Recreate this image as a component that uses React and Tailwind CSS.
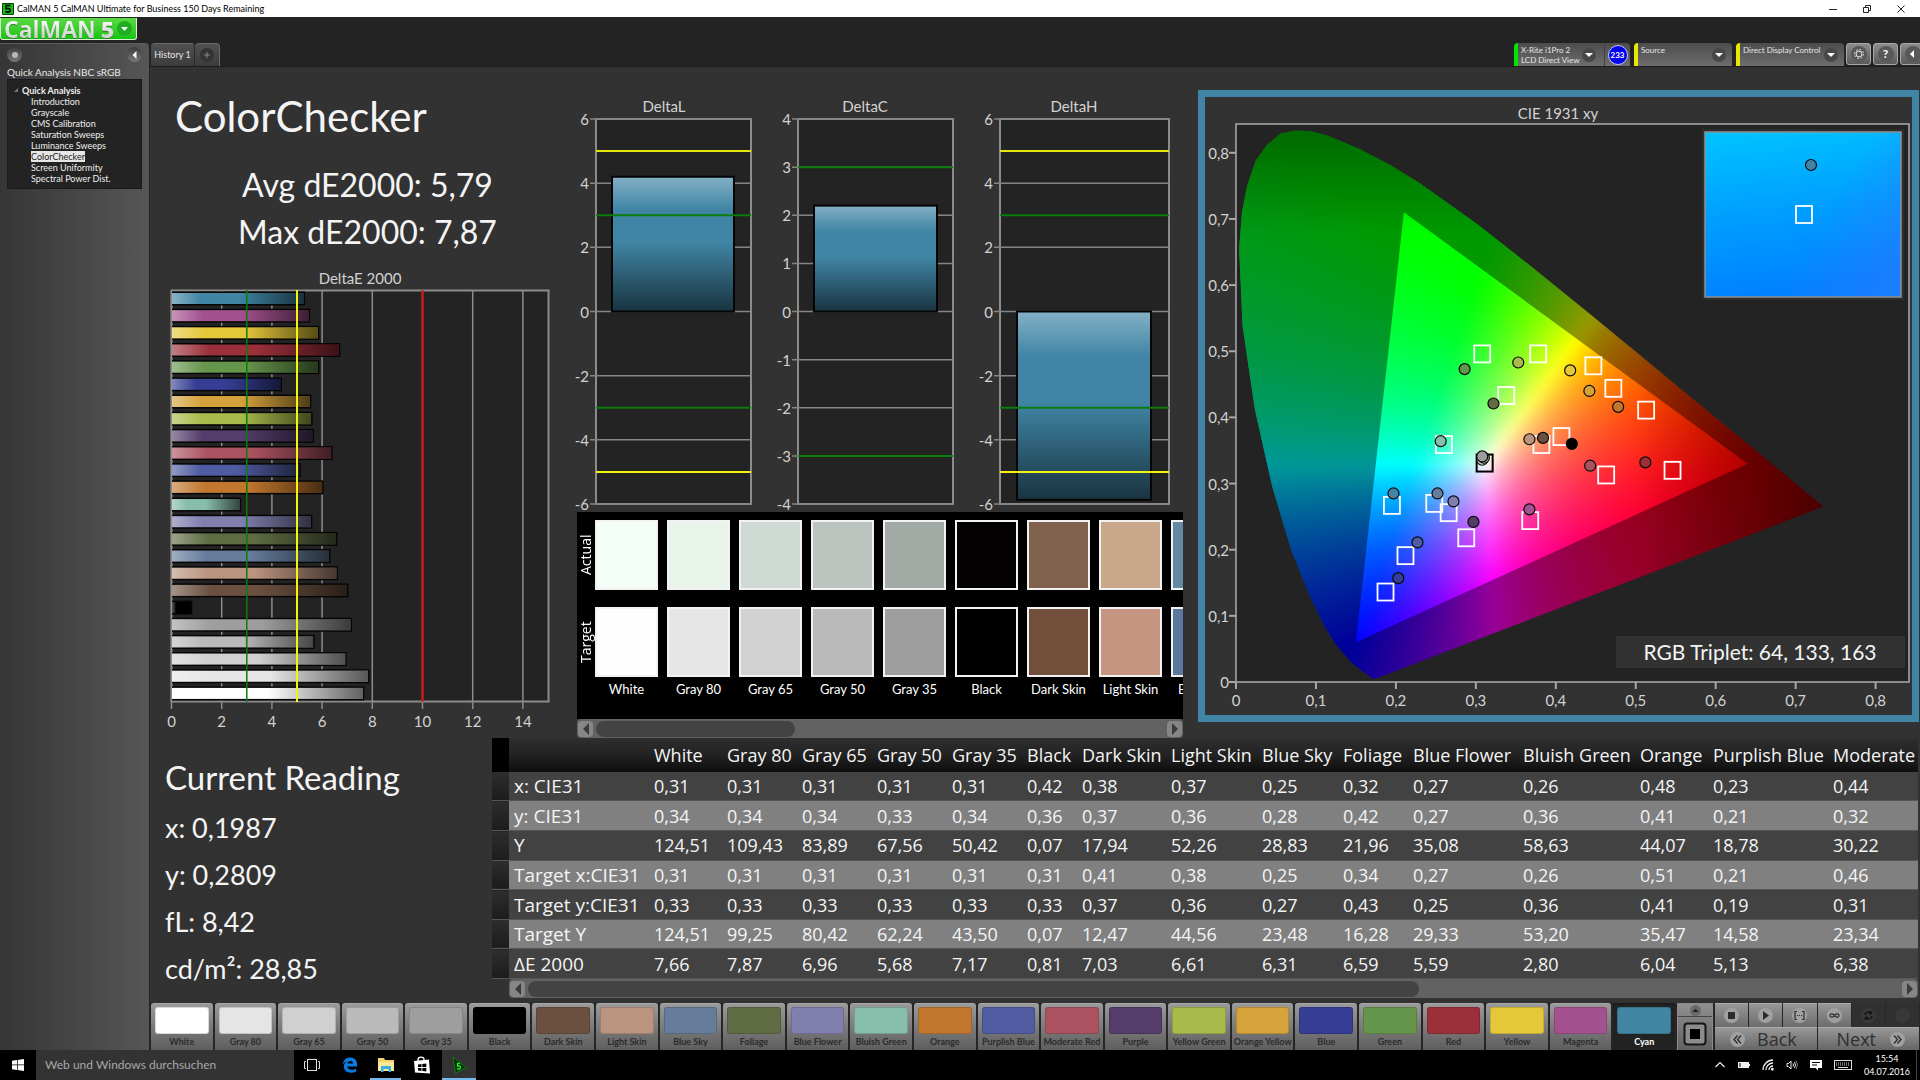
import React from "react";

const PATCHES = [
  { name: "White", color: "#ffffff", de: 7.66 },
  { name: "Gray 80", color: "#e5e5e5", de: 7.87 },
  { name: "Gray 65", color: "#d0d0d0", de: 6.96 },
  { name: "Gray 50", color: "#bababa", de: 5.68 },
  { name: "Gray 35", color: "#9e9e9e", de: 7.17 },
  { name: "Black", color: "#000000", de: 0.81 },
  { name: "Dark Skin", color: "#6b5040", de: 7.03 },
  { name: "Light Skin", color: "#bb947f", de: 6.61 },
  { name: "Blue Sky", color: "#657c9b", de: 6.31 },
  { name: "Foliage", color: "#5f6c44", de: 6.59 },
  { name: "Blue Flower", color: "#807fae", de: 5.59 },
  { name: "Bluish Green", color: "#87bdab", de: 2.75 },
  { name: "Orange", color: "#c2772f", de: 6.04 },
  { name: "Purplish Blue", color: "#4f5ca2", de: 5.13 },
  { name: "Moderate Red", color: "#ab5260", de: 6.4 },
  { name: "Purple", color: "#543d6a", de: 5.66 },
  { name: "Yellow Green", color: "#a8bb4b", de: 5.6 },
  { name: "Orange Yellow", color: "#d5a23b", de: 5.55 },
  { name: "Blue", color: "#353e94", de: 4.38 },
  { name: "Green", color: "#66954c", de: 5.87 },
  { name: "Red", color: "#9b303a", de: 6.7 },
  { name: "Yellow", color: "#e5c83a", de: 5.87 },
  { name: "Magenta", color: "#a4528f", de: 5.5 },
  { name: "Cyan", color: "#4085a3", de: 5.3 },
];

const COMPARISON = [
  ["White", "#f4fff7", "#fdfdfd"],
  ["Gray 80", "#e8f3e9", "#e6e6e6"],
  ["Gray 65", "#cdd9d2", "#d2d2d2"],
  ["Gray 50", "#bbc4bf", "#bababa"],
  ["Gray 35", "#a1aaa4", "#9e9e9e"],
  ["Black", "#040102", "#000000"],
  ["Dark Skin", "#80624f", "#724f3b"],
  ["Light Skin", "#c9a78b", "#c69582"],
  ["Blue Sky", "#6489a3", "#5d789d"],
];

const COLUMNS = [
  ["White", "w-[73px]"],
  ["Gray 80", "w-[75px]"],
  ["Gray 65", "w-[75px]"],
  ["Gray 50", "w-[75px]"],
  ["Gray 35", "w-[75px]"],
  ["Black", "w-[55px]"],
  ["Dark Skin", "w-[89px]"],
  ["Light Skin", "w-[91px]"],
  ["Blue Sky", "w-[81px]"],
  ["Foliage", "w-[70px]"],
  ["Blue Flower", "w-[110px]"],
  ["Bluish Green", "w-[117px]"],
  ["Orange", "w-[73px]"],
  ["Purplish Blue", "w-[120px]"],
  ["Moderate Red", "w-[140px]"],
];

const ROWS = [
  ["x: CIE31", "0,31", "0,31", "0,31", "0,31", "0,31", "0,42", "0,38", "0,37", "0,25", "0,32", "0,27", "0,26", "0,48", "0,23", "0,44"],
  ["y: CIE31", "0,34", "0,34", "0,34", "0,33", "0,34", "0,36", "0,37", "0,36", "0,28", "0,42", "0,27", "0,36", "0,41", "0,21", "0,32"],
  ["Y", "124,51", "109,43", "83,89", "67,56", "50,42", "0,07", "17,94", "52,26", "28,83", "21,96", "35,08", "58,63", "44,07", "18,78", "30,22"],
  ["Target x:CIE31", "0,31", "0,31", "0,31", "0,31", "0,31", "0,31", "0,41", "0,38", "0,25", "0,34", "0,27", "0,26", "0,51", "0,21", "0,46"],
  ["Target y:CIE31", "0,33", "0,33", "0,33", "0,33", "0,33", "0,33", "0,37", "0,36", "0,27", "0,43", "0,25", "0,36", "0,41", "0,19", "0,31"],
  ["Target Y", "124,51", "99,25", "80,42", "62,24", "43,50", "0,07", "12,47", "44,56", "23,48", "16,28", "29,33", "53,20", "35,47", "14,58", "23,34"],
  ["ΔE 2000", "7,66", "7,87", "6,96", "5,68", "7,17", "0,81", "7,03", "6,61", "6,31", "6,59", "5,59", "2,80", "6,04", "5,13", "6,38"],
];

const TREE = [
  "Introduction",
  "Grayscale",
  "CMS Calibration",
  "Saturation Sweeps",
  "Luminance Sweeps",
  "ColorChecker",
  "Screen Uniformity",
  "Spectral Power Dist.",
];

/* ---------- Window chrome ---------- */

function TitleBar() {
  return (
    <header className="flex h-[17px] shrink-0 items-center bg-white text-black">
      <svg className="ml-0.5 size-3" viewBox="0 0 12 12" aria-hidden="true">
        <rect width="12" height="12" rx="1" fill="#0a3d0a" />
        <rect x="1" y="1" width="10" height="10" fill="#16c016" />
        <path d="M8.5 2.5H4v3.2h2.6a1.6 1.6 0 0 1 0 3.3H3.4" fill="none" stroke="#021a02" strokeWidth="1.8" />
      </svg>
      <span className="ml-[3px] text-[9px] leading-4">
        CalMAN 5 CalMAN Ultimate for Business 150 Days Remaining
      </span>
      <div className="ml-auto flex items-center gap-[22px] pr-[13px]">
        <button aria-label="Minimize" className="size-3">
          <svg viewBox="0 0 12 12"><path d="M2 6.5h8" stroke="#222" /></svg>
        </button>
        <button aria-label="Restore" className="size-3">
          <svg viewBox="0 0 12 12" fill="none" stroke="#222">
            <path d="M2.500 4.500h5v5h-5zM4.500 4.500v-2h5v5h-2" />
          </svg>
        </button>
        <button aria-label="Close" className="size-3">
          <svg viewBox="0 0 12 12"><path d="M2.500 2.500l7 7M9.500 2.500l-7 7" stroke="#222" /></svg>
        </button>
      </div>
    </header>
  );
}

function Logo() {
  return (
    <div className="h-[26px] shrink-0 pt-px">
      <button
        aria-label="CalMAN 5 menu"
        className="flex h-[22px] w-[137px] items-center rounded-b-[3px] border border-t-0 border-[#d8f5d0] bg-linear-to-b from-[#59d943] to-[#0cc40c] pl-[3px]"
      >
        <span className="bg-linear-to-b from-white to-[#c4ccc4] bg-clip-text font-['Open_Sans',sans-serif] text-[23px] leading-[22px] font-bold text-transparent drop-shadow-[0_1px_0_#2f7a2f]">
          CalMAN
        </span>
        <span className="ml-[5px] bg-linear-to-b from-white to-[#c4ccc4] bg-clip-text font-['Open_Sans',sans-serif] text-[23px] leading-[22px] font-extrabold text-transparent drop-shadow-[0_1px_0_#2f7a2f]">
          5
        </span>
        <svg className="ml-auto mr-1 size-[15px]" viewBox="0 0 15 15" aria-hidden="true">
          <circle cx="7.500" cy="7.500" r="7.500" fill="#1fae1f" />
          <path d="M4 6h7l-3.500 4z" fill="#fff" />
        </svg>
      </button>
    </div>
  );
}

function Dial({ children, label }) {
  return (
    <button
      aria-label={label}
      className="flex size-[15px] shrink-0 items-center justify-center rounded-full bg-linear-to-b from-[#3c3c3c] to-[#787878]"
    >
      {children}
    </button>
  );
}

function Sidebar() {
  return (
    <nav className="flex w-[149px] shrink-0 flex-col rounded-tr border-t border-[#5c5c5c] bg-linear-to-r from-[#363636] to-[#565656] px-[7px] text-[#e8e8e8]">
      <div className="flex h-[21px] items-center justify-between">
        <Dial label="Record">
          <svg viewBox="0 0 10 10" className="size-2.5"><circle cx="5" cy="5" r="3" fill="#b8b8b8" /></svg>
        </Dial>
        <Dial label="Collapse sidebar">
          <svg viewBox="0 0 10 10" className="size-2.5"><path d="M6.500 1v8L2.500 5z" fill="#fff" /></svg>
        </Dial>
      </div>
      <p className="text-[10px] leading-[14px] whitespace-nowrap">Quick Analysis NBC sRGB</p>
      <div className="border border-[#1a1a1a] bg-[#232323] pt-1 pb-1 text-[9px] leading-[11px] text-[#eeeeee]">
        <div className="flex h-3 items-center gap-1 pl-1.5 font-bold">
          <svg viewBox="0 0 4 4" className="size-1"><path d="M4 0v4H0z" fill="#777" /></svg>
          Quick Analysis
        </div>
        <ul className="pl-[23px]">
          {TREE.map((t) => (
            <li key={t} className="h-[11px]">
              <a href="#" className={t === "ColorChecker" ? "bg-[#e6e6e6] text-[#222]" : ""}>
                {t}
              </a>
            </li>
          ))}
        </ul>
      </div>
    </nav>
  );
}

function Caret() {
  return (
    <span className="flex size-3.5 shrink-0 items-center justify-center rounded-full bg-[#474747]">
      <svg viewBox="0 0 8 8" className="size-2"><path d="M0 2h8L4 6z" fill="#fff" /></svg>
    </span>
  );
}

function SquareButton({ label, children }) {
  return (
    <button
      aria-label={label}
      className="flex h-[22px] w-[25px] shrink-0 items-center justify-center rounded-[3px] border border-[#a8a8a8] bg-linear-to-b from-[#8c8c8c] to-[#5a5a5a]"
    >
      <span className="flex size-4 items-center justify-center rounded-full bg-[#585858]">{children}</span>
    </button>
  );
}

function TopTabs() {
  return (
    <div className="flex h-[23px] shrink-0 text-[9px] leading-[10px] text-[#e6e6e6]">
      <button className="ml-px w-11 rounded-t border-t border-r border-[#6a6a6a] border-r-[#2a2a2a] bg-linear-to-b from-[#505050] to-[#3c3c3c] whitespace-nowrap">
        History 1
      </button>
      <button aria-label="Add history" className="flex w-[25px] items-center justify-center rounded-t border-t border-r border-[#6a6a6a] bg-linear-to-b from-[#505050] to-[#3c3c3c]">
        <span className="flex size-3.5 items-center justify-center rounded-full bg-[#343434]">
          <svg viewBox="0 0 8 8" className="size-2"><path d="M4 1v6M1 4h6" stroke="#888" /></svg>
        </span>
      </button>
      <div className="ml-auto flex text-[8px]">
        <button className="flex w-[90px] items-center rounded-tl border-l-4 border-[#00e800] bg-linear-to-b from-[#4c4c4c] to-[#6e6e6e] pr-2 pl-[3px] text-left">
          <span className="flex-1 whitespace-nowrap">X-Rite i1Pro 2<br />LCD Direct View</span>
          <Caret />
        </button>
        <span className="mr-1 flex w-[26px] items-center justify-center rounded-tr border-l border-[#404040] bg-linear-to-b from-[#4c4c4c] to-[#6e6e6e]">
          <span className="flex size-5 items-center justify-center rounded-full border border-[#c8c8ff] bg-[#0000f0] font-bold text-white">
            233
          </span>
        </span>
        <button className="mr-1 flex w-[98px] items-center rounded-t border-l-4 border-[#e8e800] bg-linear-to-b from-[#4c4c4c] to-[#6e6e6e] pr-1.5 pl-[3px] text-left">
          <span className="flex-1 self-start pt-0.5">Source</span>
          <Caret />
        </button>
        <button className="mr-0.5 flex w-[108px] items-center rounded-t border-l-4 border-[#e8e800] bg-linear-to-b from-[#4c4c4c] to-[#6e6e6e] pr-1.5 pl-[3px] text-left">
          <span className="flex-1 self-start pt-0.5 whitespace-nowrap">Direct Display Control</span>
          <Caret />
        </button>
        <div className="flex gap-0.5">
          <SquareButton label="Settings">
            <svg viewBox="0 0 12 12" className="size-3" fill="none" stroke="#eee">
              <circle cx="6" cy="6" r="3" />
              <circle cx="6" cy="6" r="4.500" strokeDasharray="1.600 1.930" />
            </svg>
          </SquareButton>
          <SquareButton label="Help"><span className="text-xs font-bold text-white">?</span></SquareButton>
          <div className="w-5 overflow-hidden">
            <SquareButton label="Collapse panel">
              <svg viewBox="0 0 10 10" className="size-2.5"><path d="M6 1v8L2 5z" fill="#fff" /></svg>
            </SquareButton>
          </div>
        </div>
      </div>
    </div>
  );
}

/* ---------- Charts ---------- */

const DE_UNIT = 25.1;

function DeltaEChart() {
  const x = (v) => 21.5 + v * DE_UNIT;
  const bars = [...PATCHES].reverse();
  return (
    <svg viewBox="0 0 427 469" className="block w-full" role="img" aria-label="DeltaE 2000 per patch">
      <defs>
        <linearGradient id="barShadeH">
          <stop offset="0" stopColor="#fff" stopOpacity=".38" />
          <stop offset=".22" stopColor="#fff" stopOpacity="0" />
          <stop offset=".5" stopColor="#000" stopOpacity="0" />
          <stop offset="1" stopColor="#000" stopOpacity=".62" />
        </linearGradient>
      </defs>
      <text x="210" y="18" textAnchor="middle" fontSize="15" fill="#d2d2d2">DeltaE 2000</text>
      <rect x="21.500" y="24.500" width="377" height="411" fill="#232323" stroke="#8c8c8c" strokeWidth="2" />
      {[0, 2, 4, 6, 8, 10, 12, 14].map((v) => (
        <g key={v}>
          <line x1={x(v)} x2={x(v)} y1="25" y2="443" stroke="#8c8c8c" strokeWidth="1.500" />
          <text x={x(v)} y="461" textAnchor="middle" fontSize="15" fill="#d2d2d2">{v}</text>
        </g>
      ))}
      {bars.map((p, i) => {
        const y = 25.5 + i * 17.17;
        const w = p.de * DE_UNIT;
        return (
          <g key={p.name}>
            <rect x="22" y={y} width={w} height="14" fill="#050505" />
            <rect x="22" y={y + 1.5} width={w - 1.5} height="11" fill={p.color} />
            <rect x="22" y={y + 1.5} width={w - 1.5} height="11" fill="url(#barShadeH)" />
          </g>
        );
      })}
      <line x1={x(3)} x2={x(3)} y1="24" y2="436" stroke="#0a7d0a" strokeWidth="1.500" />
      <line x1={x(5)} x2={x(5)} y1="24" y2="436" stroke="#f4f410" strokeWidth="2" />
      <line x1={x(10)} x2={x(10)} y1="24" y2="436" stroke="#e01010" strokeWidth="2" />
    </svg>
  );
}

function DeltaChart({ title, titleX, max, step, right, bar, value, limits }) {
  const top = 23;
  const bottom = 408;
  const y = (v) => top + ((max - v) / (2 * max)) * (bottom - top);
  const ticks = [];
  for (let v = max; v >= -max; v -= step) ticks.push(v);
  const y1 = Math.min(y(value), y(0));
  const y2 = Math.max(y(value), y(0));
  return (
    <svg viewBox="0 0 202 416" className="block w-full overflow-visible" role="img" aria-label={title}>
      <defs>
        <linearGradient id="barShadeV" x2="0" y2="1">
          <stop offset="0" stopColor="#84b0c5" />
          <stop offset=".24" stopColor="#4085a5" />
          <stop offset=".48" stopColor="#4085a5" />
          <stop offset="1" stopColor="#193340" />
        </linearGradient>
      </defs>
      <text x={titleX} y="16" textAnchor="middle" fontSize="15" fill="#d2d2d2">{title}</text>
      <rect x="19" y={top} width={right - 19} height={bottom - top} fill="#232323" stroke="#8c8c8c" strokeWidth="2" />
      {ticks.map((v) => (
        <g key={v}>
          <line x1="13" x2={right} y1={y(v)} y2={y(v)} stroke="#858585" strokeWidth="1.500" />
          <text x="12" y={y(v) + 6} textAnchor="end" fontSize="15" fill="#d2d2d2">{v}</text>
        </g>
      ))}
      <rect x={bar[0]} y={y1} width={bar[1] - bar[0]} height={y2 - y1} fill="url(#barShadeV)" stroke="#050505" strokeWidth="2" />
      {limits.map(([v, c]) => (
        <line key={v} x1="19" x2={right} y1={y(v)} y2={y(v)} stroke={c} strokeWidth="2" />
      ))}
    </svg>
  );
}

const LOCUS = [
  [0.1741, 0.005], [0.1714, 0.0051], [0.1644, 0.0109], [0.1566, 0.0177], [0.144, 0.0297], [0.1241, 0.0578],
  [0.1096, 0.0868], [0.0913, 0.1327], [0.0687, 0.2007], [0.0454, 0.295], [0.0235, 0.4127], [0.0082, 0.5384],
  [0.0039, 0.6548], [0.0075, 0.71], [0.0139, 0.7502], [0.0245, 0.788], [0.0389, 0.812], [0.0555, 0.829], [0.0743, 0.8338],
  [0.094, 0.8325], [0.1142, 0.8262], [0.1547, 0.8059], [0.1929, 0.7816], [0.2296, 0.7543], [0.3016, 0.6923],
  [0.3731, 0.6245], [0.4441, 0.5547], [0.5125, 0.4866], [0.5752, 0.4242], [0.627, 0.3725], [0.6658, 0.334],
  [0.6915, 0.3083], [0.719, 0.2809], [0.7347, 0.2653],
];

const cx = (v) => 31 + v * 799.5;
const cy = (v) => 585 - v * 661.5;

function chromaColor(x, y) {
  const yy = Math.max(y, 0.004);
  const X = x / yy;
  const Z = (1 - x - yy) / yy;
  const rgb = [
    3.2406 * X - 1.5372 - 0.4986 * Z,
    -0.9689 * X + 1.8758 + 0.0415 * Z,
    0.0557 * X - 0.204 + 1.057 * Z,
  ].map((c) => Math.max(0, c));
  const peak = Math.max(...rgb);
  const redFade = x > 0.5 ? 1 - 2.2 * (x - 0.5) : 1;
  const greenFade = y > 0.68 ? 1 - 2 * (y - 0.68) : 1;
  const f = (255 * redFade * greenFade) / peak;
  return "rgb(" + rgb.map((c) => Math.round(c * f)).join(",") + ")";
}

const CELL = 6;
const CELLS = [];
for (let px = 18; px < 640; px += CELL) {
  for (let py = 18; py < 600; py += CELL) {
    const x = (px + CELL / 2 - 31) / 799.5;
    const y = (585 - py - CELL / 2) / 661.5;
    if (x + y > 1.05 || y < (x - 0.17) * 0.465 - 0.04) continue;
    CELLS.push([px, py, chromaColor(x, y)]);
  }
}

const TARGETS = [
  [0.308, 0.496], [0.378, 0.496], [0.447, 0.478], [0.472, 0.444], [0.513, 0.411], [0.338, 0.433], [0.26, 0.359],
  [0.382, 0.359], [0.407, 0.371], [0.463, 0.313], [0.546, 0.32], [0.195, 0.267], [0.248, 0.27], [0.266, 0.256],
  [0.288, 0.218], [0.368, 0.244], [0.212, 0.191], [0.187, 0.136],
];

const READINGS = [
  [0.286, 0.473, "#66954c"], [0.353, 0.483, "#a8bb4b"], [0.418, 0.471, "#e5c83a"], [0.442, 0.44, "#d5a23b"],
  [0.478, 0.416, "#c2772f"], [0.322, 0.421, "#5f6c44"], [0.256, 0.364, "#87bdab"], [0.367, 0.367, "#bb947f"],
  [0.384, 0.369, "#6b5040"], [0.42, 0.36, "#000000"], [0.308, 0.336, "#d0d0d0"], [0.31, 0.339, "#bababa"],
  [0.308, 0.341, "#9e9e9e"], [0.443, 0.327, "#ab5260"], [0.512, 0.332, "#9b303a"], [0.197, 0.285, "#4085a3"],
  [0.252, 0.285, "#657c9b"], [0.272, 0.273, "#807fae"], [0.297, 0.242, "#543d6a"], [0.367, 0.261, "#a4528f"],
  [0.227, 0.211, "#4f5ca2"], [0.203, 0.157, "#353e94"],
];

function CieChart() {
  const locus = LOCUS.map(([x, y]) => cx(x) + "," + cy(y)).join(" ");
  const gamut = [[0.64, 0.33], [0.21, 0.71], [0.15, 0.06]].map(([x, y]) => cx(x) + "," + cy(y)).join(" ");
  const xt = [0, 1, 2, 3, 4, 5, 6, 7, 8];
  const label = (n) => (n === 0 ? "0" : "0," + n);
  return (
    <svg viewBox="0 0 707 618" className="block w-full" role="img" aria-label="CIE 1931 xy chromaticity diagram">
      <defs>
        <clipPath id="locusClip"><polygon points={locus} /></clipPath>
        <clipPath id="gamutClip"><polygon points={gamut} /></clipPath>
        <filter id="soften" x="-5%" y="-5%" width="110%" height="110%" colorInterpolationFilters="sRGB">
          <feGaussianBlur stdDeviation="4" />
        </filter>
        <g id="chroma" filter="url(#soften)">
          {CELLS.map(([px, py, c]) => (
            <rect key={px + "-" + py} x={px} y={py} width={CELL} height={CELL} fill={c} shapeRendering="crispEdges" />
          ))}
        </g>
        <linearGradient id="insetV" x2="0.15" y2="1">
          <stop offset="0" stopColor="#00c4ff" />
          <stop offset=".5" stopColor="#00a0ff" />
          <stop offset="1" stopColor="#0082ff" />
        </linearGradient>
        <linearGradient id="insetH" x1=".6" y1=".5" x2="1" y2=".7">
          <stop offset="0" stopColor="#3078ff" stopOpacity="0" />
          <stop offset="1" stopColor="#3078ff" stopOpacity=".5" />
        </linearGradient>
      </defs>
      <text x="353" y="22" textAnchor="middle" fontSize="15" fill="#d2d2d2">CIE 1931 xy</text>
      <rect x="31" y="27" width="673" height="558" fill="#232323" stroke="#8c8c8c" strokeWidth="2" />
      {xt.map((n) => (
        <g key={n} fontSize="15" fill="#d2d2d2" stroke="none">
          <line x1={cx(n / 10)} x2={cx(n / 10)} y1="585" y2="592" stroke="#a8a8a8" strokeWidth="2" />
          <line x1="24" x2="31" y1={cy(n / 10)} y2={cy(n / 10)} stroke="#a8a8a8" strokeWidth="2" />
          <text x={cx(n / 10)} y="609" textAnchor="middle">{label(n)}</text>
          <text x="24" y={cy(n / 10) + 6} textAnchor="end">{label(n)}</text>
        </g>
      ))}
      <g clipPath="url(#locusClip)">
        <use href="#chroma" />
        <rect x="24" y="20" width="640" height="580" fill="#000" opacity=".4" />
        <g clipPath="url(#gamutClip)"><use href="#chroma" /></g>
      </g>
      {TARGETS.map(([x, y]) => (
        <rect key={x + "/" + y} x={cx(x) - 8} y={cy(y) - 8.5} width="16" height="17" fill="none" stroke="#fff" strokeWidth="1.800" />
      ))}
      <rect x={cx(0.311) - 8} y={cy(0.331) - 8.5} width="16" height="17" fill="none" stroke="#000" strokeWidth="2" />
      {READINGS.map(([x, y, c]) => (
        <circle key={x + "/" + y} cx={cx(x)} cy={cy(y)} r="5.500" fill={c} stroke="#0a0a0a" strokeWidth="1.200" />
      ))}
      <rect x="497" y="32" width="202" height="171" fill="#2d2d2d" />
      <rect x="500" y="35" width="196" height="165" fill="url(#insetV)" />
      <rect x="500" y="35" width="196" height="165" fill="url(#insetH)" stroke="#909090" strokeWidth="1.500" />
      <circle cx="606" cy="68" r="5.500" fill="#4085a3" stroke="#0a0a0a" strokeWidth="1.200" />
      <rect x="591" y="109" width="16" height="17" fill="none" stroke="#fff" strokeWidth="1.800" />
      <rect x="411" y="539" width="289" height="32" fill="#323232" />
      <text x="555" y="563" textAnchor="middle" fontSize="21" fill="#f4f4f4">RGB Triplet: 64, 133, 163</text>
    </svg>
  );
}

/* ---------- Panels ---------- */

function ScrollBar({ thumb, label }) {
  return (
    <div className="flex h-[19px] items-center rounded-sm bg-[#626262] px-px" role="group" aria-label={label}>
      <button aria-label="Scroll left" className="flex h-4 w-[15px] shrink-0 items-center justify-center rounded bg-[#868686]">
        <svg viewBox="0 0 6 12" className="h-3 w-1.5"><path d="M6 0v12L0 6z" fill="#3a3a3a" /></svg>
      </button>
      <div className="mx-[3px] h-4 flex-1">
        <div className={"h-4 rounded-lg bg-[#434343] " + thumb} />
      </div>
      <button aria-label="Scroll right" className="flex h-4 w-[15px] shrink-0 items-center justify-center rounded bg-[#868686]">
        <svg viewBox="0 0 6 12" className="h-3 w-1.5"><path d="M0 0v12L6 6z" fill="#3a3a3a" /></svg>
      </button>
    </div>
  );
}

function ComparisonPanel() {
  return (
    <section className="flex min-w-0 flex-col">
      <div className="flex h-[207px] overflow-hidden bg-black text-white">
        <div className="flex w-[18px] shrink-0 flex-col gap-[17px] pt-2 font-['Open_Sans',sans-serif] text-sm leading-[18px]">
          <span className="h-[70px] rotate-180 text-center [writing-mode:vertical-rl]">Actual</span>
          <span className="h-[70px] rotate-180 text-center [writing-mode:vertical-rl]">Target</span>
        </div>
        <div className="flex shrink-0 gap-[9px] pt-2">
          {COMPARISON.map(([name, actual, target]) => (
            <div key={name} className="flex w-[63px] flex-col gap-[17px] text-center">
              <span className="h-[70px] border-2 border-[#f2f2f2]" style={{ backgroundColor: actual }} />
              <div>
                <div className="h-[70px] border-2 border-[#f2f2f2]" style={{ backgroundColor: target }} />
                <span className="block pt-0.5 text-[13px] leading-5 whitespace-nowrap">{name}</span>
              </div>
            </div>
          ))}
        </div>
      </div>
      <ScrollBar label="Patch comparison scroll" thumb="w-[35%]" />
    </section>
  );
}

function DataTable() {
  return (
    <div className="min-w-0 pr-0.5">
      <div className="overflow-hidden">
        <table className="h-[241px] w-[1476px] table-fixed border-collapse text-left font-['Open_Sans',sans-serif] text-lg leading-6 whitespace-nowrap text-[#f4f4f4]">
          <colgroup>
            <col className="w-[17px]" />
            <col className="w-[140px]" />
            {COLUMNS.map(([n, w]) => <col key={n} className={w} />)}
          </colgroup>
          <thead>
            <tr className="h-[34px] bg-linear-to-b from-[#2e2e2e] via-[#222] to-[#0e0e0e]">
              <td className="bg-black" />
              <td />
              {COLUMNS.map(([n]) => <th key={n} scope="col" className="pl-[5px] font-normal">{n}</th>)}
            </tr>
          </thead>
          <tbody>
            {ROWS.map(([label, ...cells]) => (
              <tr key={label} className="border-b border-[#565656] bg-[#424242] even:bg-[#808080]">
                <td className="bg-linear-to-b from-[#2e2e2e] to-[#1c1c1c]" />
                <th scope="row" className="pl-[5px] text-[19px] font-normal">{label}</th>
                {cells.map((c, i) => <td key={i} className="pl-[5px]">{c}</td>)}
              </tr>
            ))}
          </tbody>
        </table>
      </div>
      <div className="pl-[17px]"><ScrollBar label="Table scroll" thumb="w-[65%]" /></div>
    </div>
  );
}

function RoundIcon({ children, dim }) {
  return (
    <span className={"flex size-[15px] items-center justify-center rounded-full " + (dim ? "bg-[#383838]" : "bg-[#a0a0a0]")}>
      {children}
    </span>
  );
}

const TRANSPORT = [
  ["Stop", <rect x="2" y="2" width="7" height="7" fill="#2c2c2c" />],
  ["Play", <path d="M3 1v9l6-4.500z" fill="#2c2c2c" />],
  ["Range", <path d="M3 1.500H1v8h2M8 1.500h2v8H8M3 5.500h1M5 5.500h1M7 5.500h1" fill="none" stroke="#2c2c2c" strokeWidth="1.200" />],
  ["Continuous", <path d="M5.500 5.500C4.500 3.500 1 3 1 5.500s3.500 2 4.500 0 4.500-2.500 4.500 0-3.500 2-4.500 0z" fill="none" stroke="#2c2c2c" strokeWidth="1.200" />],
];

function BottomBar() {
  return (
    <footer className="flex h-[47px] shrink-0 bg-[#262626] pr-px pl-px">
      <div className="grid flex-1 grid-cols-24 gap-0.5">
        {PATCHES.map((p) => {
          const active = p.name === "Cyan";
          return (
            <button
              key={p.name}
              className={
                "flex min-w-0 flex-col rounded-t-[3px] border-t px-1 pt-[3px] text-[9px] leading-3 font-bold whitespace-nowrap " +
                (active
                  ? "border-[#1a1a1a] bg-[#222] text-white"
                  : "border-[#a8a8a8] bg-linear-to-b from-[#9a9a9a] to-[#5e5e5e] text-[#2b2b2b]")
              }
            >
              <span className="h-[27px] w-full rounded-[3px] border border-black/15" style={{ backgroundColor: p.color }} />
              <span className="flex w-full justify-center pt-0.5">{p.name}</span>
            </button>
          );
        })}
      </div>
      <div className="ml-0.5 flex w-9 flex-col border-x border-t border-[#8c8c8c] bg-linear-to-b from-[#909090] to-[#626262]">
        <button aria-label="Expand" className="flex h-[13px] items-center justify-center border-b border-[#444]">
          <svg viewBox="0 0 12 12" className="size-[11px]"><circle cx="6" cy="6" r="6" fill="#6a6a6a" /><path d="M2.500 7.500h7L6 4z" fill="#222" /></svg>
        </button>
        <button aria-label="Pattern window" className="flex flex-1 items-center justify-center">
          <svg viewBox="0 0 24 24" className="size-6">
            <rect x="1.500" y="1.500" width="21" height="21" rx="3" fill="#8c8c8c" stroke="#161616" strokeWidth="2" />
            <rect x="7" y="7" width="10" height="10" fill="#000" />
          </svg>
        </button>
      </div>
      <div className="ml-0.5 flex w-[204px] flex-col">
        <div className="grid h-6 grid-cols-6 gap-px">
          {TRANSPORT.map(([label, icon]) => (
            <button key={label} aria-label={label} className="flex items-center justify-center border-t border-[#aaa] bg-linear-to-b from-[#979797] to-[#6c6c6c]">
              <RoundIcon><svg viewBox="0 0 11 11" className="size-[11px]">{icon}</svg></RoundIcon>
            </button>
          ))}
          <button aria-label="Refresh" className="flex items-center justify-center bg-[#303030]">
            <RoundIcon dim>
              <svg viewBox="0 0 11 11" className="size-[11px]" fill="none" stroke="#151515" strokeWidth="1.500">
                <path d="M2 5a3.500 3.500 0 0 1 6-2M9 6a3.500 3.500 0 0 1-6 2M8.500 1v2.500H6M2.500 10V7.500H5" />
              </svg>
            </RoundIcon>
          </button>
          <button aria-label="Record" className="flex items-center justify-center bg-[#303030]"><RoundIcon dim /></button>
        </div>
        <div className="grid flex-1 grid-cols-2 gap-px font-['Open_Sans',sans-serif] text-lg leading-[22px] text-[#303030]">
          <button className="flex items-center gap-3 border-t border-[#aaa] bg-linear-to-b from-[#979797] to-[#666] pl-[15px]">
            <RoundIcon><svg viewBox="0 0 11 11" className="size-[11px]" fill="none" stroke="#2c2c2c" strokeWidth="1.300"><path d="M5.500 1.500l-3.500 4 3.500 4M9 1.500l-3.500 4 3.500 4" /></svg></RoundIcon>
            Back
          </button>
          <button className="flex items-center justify-end gap-3.5 border-t border-[#aaa] bg-linear-to-b from-[#979797] to-[#666] pr-3.5">
            Next
            <RoundIcon><svg viewBox="0 0 11 11" className="size-[11px]" fill="none" stroke="#2c2c2c" strokeWidth="1.300"><path d="M2 1.500l3.500 4-3.500 4M5.500 1.500l3.500 4-3.500 4" /></svg></RoundIcon>
          </button>
        </div>
      </div>
    </footer>
  );
}

function Taskbar() {
  return (
    <footer className="flex h-[30px] shrink-0 items-stretch bg-black text-white">
      <button aria-label="Start" className="flex w-9 items-center justify-center">
        <svg viewBox="0 0 12 12" className="size-3"><path d="M0 1.700l5-.7v4.600H0zM5.700.9L12 0v5.600H5.700zM0 6.300h5V11l-5-.7zM5.700 6.300H12V12l-6.300-.9z" fill="#fff" /></svg>
      </button>
      <input
        aria-label="Search"
        placeholder="Web und Windows durchsuchen"
        className="w-[258px] bg-[#333] pl-[9px] font-['Lato',sans-serif] text-xs placeholder:text-[#a8a8a8]"
      />
      <button aria-label="Task view" className="flex w-9 items-center justify-center">
        <svg viewBox="0 0 16 14" className="h-3.5 w-4" fill="none" stroke="#ddd"><rect x="3.500" y="1.500" width="9" height="11" /><path d="M2 3.500H.5v7H2M14 3.500h1.500v7H14" /></svg>
      </button>
      <button aria-label="Edge" className="flex w-10 items-center justify-center">
        <svg viewBox="0 0 16 16" className="size-4"><path d="M.7 7.400C1.400 3 4.400.6 8.100.6c4 0 7 2.600 7 7.100v1.700H5.300c.1 2.200 2 3.300 4.300 3.300 1.700 0 3.200-.5 4.500-1.300v3.100c-1.500.8-3.200 1.200-5.200 1.200-4.300 0-7-2.400-7-6.100 0-2.200 1.100-4 3-5-2 .5-3.400 1.600-4.200 2.800zM5.400 6.600h5.700c0-1.700-1-2.700-2.700-2.700S5.600 5 5.400 6.600z" fill="#0a7ce0" /></svg>
      </button>
      <button aria-label="File Explorer" className="flex w-[31px] items-center justify-center border-b-2 border-[#76b9ed]">
        <svg viewBox="0 0 16 14" className="mt-0.5 h-3.5 w-4"><path d="M0 0h6l1 2h9v11H0z" fill="#f5d36b" /><path d="M0 4h16v9H0z" fill="#fce79a" /><path d="M3 14V8h10v6h-2.500v-3h-5v3z" fill="#37b0ea" /></svg>
      </button>
      <button aria-label="Store" className="ml-px flex w-10 items-center justify-center">
        <svg viewBox="0 0 16 18" className="h-[18px] w-4"><path d="M0 5l15-1.500 1 14L1 16.500z" fill="#fff" /><path d="M4 5V3.500C4 .5 10 0 10 3.500V5" fill="none" stroke="#fff" strokeWidth="1.300" /><path d="M4 8.500l3.500-.4v3H4zM8.300 8l4-.5v3.600h-4zM4 11.900h3.500v3L4 14.600zM8.300 11.900h4v3.500l-4-.4z" fill="#000" /></svg>
      </button>
      <button aria-label="CalMAN" className="flex w-[34px] items-center justify-center border-b-2 border-[#76b9ed] bg-[#333]">
        <svg viewBox="0 0 16 18" className="mt-0.5 h-[18px] w-4"><path d="M2 1l13.500 10.500L4.500 17z" fill="#053005" stroke="#0d8a0d" strokeWidth=".8" /><path d="M9 7.500H6.500V10H8a1.300 1.300 0 0 1 0 3H6" fill="none" stroke="#2ee62e" strokeWidth="1.300" /></svg>
      </button>
      <div className="ml-auto flex items-center">
        <div className="flex items-center gap-3">
          <svg viewBox="0 0 12 12" className="size-3" fill="none" stroke="#eee" strokeWidth="1.200"><path d="M1.500 8L6 3.500 10.500 8" /></svg>
          <svg viewBox="0 0 12 12" className="size-3"><path d="M0 3h11v2h1v2h-1v2H0z" fill="#eee" /><path d="M1 4h2v4H1z" fill="#777" /></svg>
          <svg viewBox="0 0 12 12" className="size-3" fill="none" stroke="#eee" strokeWidth="1.300"><path d="M1 11A10 10 0 0 1 11 1M4 11a7 7 0 0 1 7-7M7 11a4 4 0 0 1 4-4" /><circle cx="10.300" cy="10.300" r=".8" fill="#eee" /></svg>
          <svg viewBox="0 0 12 12" className="size-3" fill="none" stroke="#eee"><path d="M1 4.500h1.500L5 2v8L2.500 7.500H1z" /><path d="M7 4.500q1 1.500 0 3M8.500 3q2 3 0 6" /><path d="M10 1.500q3 4.500 0 9" stroke="#777" /></svg>
          <svg viewBox="0 0 12 12" className="size-3"><path d="M0 1h12v8H8v2.500L5.500 9H0z" fill="#fff" /><path d="M2 3.500h8M2 6h5" stroke="#000" /></svg>
          <svg viewBox="0 0 18 12" className="h-3 w-[18px]" fill="none" stroke="#ddd"><rect x=".5" y="1.500" width="17" height="9" /><path d="M2 4h14M2 6h14" strokeDasharray="1 1" /><path d="M4 8.500h10" /></svg>
        </div>
        <time className="ml-3 text-center text-[9px] leading-[13px]">15:54<br />04.07.2016</time>
        <span className="mr-[3px] ml-1.5 h-[30px] w-px bg-[#444]" />
      </div>
    </footer>
  );
}

export default function App() {
  return (
    <div className="flex min-h-screen flex-col overflow-hidden bg-[#232323] font-['Lato',sans-serif] text-[#f4f4f4]">
      <TitleBar />
      <Logo />
      <div className="flex flex-1">
        <Sidebar />
        <div className="flex min-w-0 flex-1 flex-col pl-px">
          <TopTabs />
          <main className="flex flex-1 flex-col border-t border-[#1c1c1c] bg-[#323232]">
            <div className="grid grid-cols-[minmax(0,427fr)_minmax(0,606fr)_minmax(0,737fr)]">
              <section>
                <h1 className="pt-6 pl-[25px] text-[42px] leading-[50px]">ColorChecker</h1>
                <div className="pt-5 pb-[11px] pl-2 text-center text-[32px] leading-[47px]">
                  <p>Avg dE2000: 5,79</p>
                  <p>Max dE2000: 7,87</p>
                </div>
                <DeltaEChart />
              </section>
              <section className="pt-[29px]">
                <div className="grid grid-cols-3">
                  <DeltaChart title="DeltaL" titleX={87} max={6} step={2} right={174} bar={[35, 157]} value={4.2}
                    limits={[[5, "#e6e60a"], [3, "#0a7d0a"], [-3, "#0a7d0a"], [-5, "#f4f410"]]} />
                  <DeltaChart title="DeltaC" titleX={86} max={4} step={1} right={174} bar={[35, 158]} value={2.2}
                    limits={[[3, "#0a7d0a"], [-3, "#0a7d0a"]]} />
                  <DeltaChart title="DeltaH" titleX={93} max={6} step={2} right={188} bar={[36, 170]} value={-5.87}
                    limits={[[5, "#e6e60a"], [3, "#0a7d0a"], [-3, "#0a7d0a"], [-5, "#f4f410"]]} />
                </div>
                <ComparisonPanel />
              </section>
              <section className="pt-[23px] pr-px pl-[15px]">
                <div className="border-[7px] border-[#4085a5]"><CieChart /></div>
              </section>
            </div>
            <div className="grid grid-cols-[342px_1fr]">
              <section className="pt-4 pl-[15px]">
                <h2 className="pb-1 text-[33px] leading-[46px]">Current Reading</h2>
                <div className="text-[27px] leading-[47px]">
                  <p>x: 0,1987</p>
                  <p>y: 0,2809</p>
                  <p>fL: 8,42</p>
                  <p>cd/m²: 28,85</p>
                </div>
              </section>
              <DataTable />
            </div>
            <div className="mt-auto"><BottomBar /></div>
          </main>
        </div>
      </div>
      <Taskbar />
    </div>
  );
}
